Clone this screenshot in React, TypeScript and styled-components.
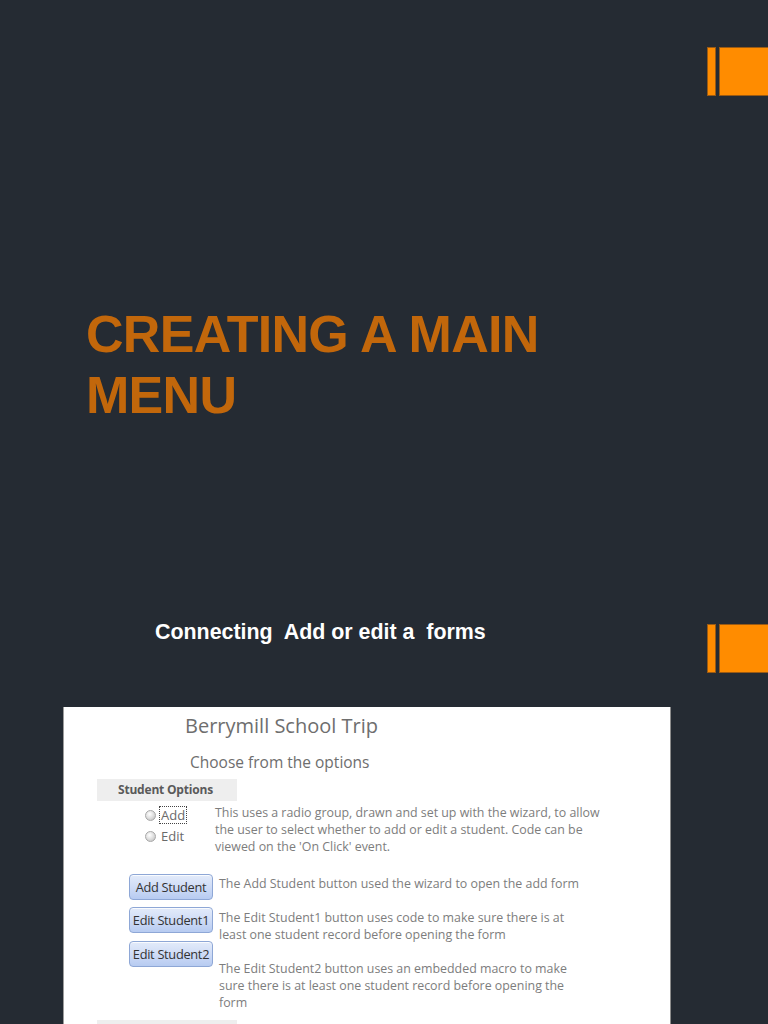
import React from "react";
import styled, { createGlobalStyle } from "styled-components";

const Global = createGlobalStyle`
  html, body {
    margin: 0;
    padding: 0;
    background: #252b33;
    overflow: hidden;
  }
  body {
    width: 768px;
    height: 1024px;
    font-family: "Liberation Sans", Arial, sans-serif;
  }
`;

const Page = styled.div`
  width: 768px;
  display: flex;
  flex-direction: column;
`;

const Slide = styled.section<{ $h?: number }>`
  width: 768px;
  height: ${(p) => (p.$h ? `${p.$h}px` : "auto")};
  background: #252b33;
  display: flex;
  flex-direction: column;
  box-sizing: border-box;
`;

const HeaderRow = styled.div<{ $top: number }>`
  display: flex;
  justify-content: space-between;
  align-items: flex-start;
  padding-top: ${(p) => p.$top}px;
`;

const Deco = styled.div`
  display: flex;
  gap: 3px;
  height: 49px;
  margin-left: auto;
`;

const Bar = styled.div<{ $w: number }>`
  width: ${(p) => p.$w}px;
  height: 100%;
  background: #ff8c00;
  box-sizing: border-box;
  border: 1px solid #9a5a14;
  border-right: ${(p) => (p.$w > 20 ? "none" : "1px solid #9a5a14")};
`;

const Title = styled.h1`
  margin: 208px 0 0 86px;
  font-family: "Liberation Sans", Arial, sans-serif;
  font-weight: 700;
  font-size: 52px;
  line-height: 61px;
  letter-spacing: -0.7px;
  color: #c2670b;
`;

const Subtitle = styled.h2`
  margin: -4px 0 0 155px;
  font-family: "Liberation Sans", Arial, sans-serif;
  font-weight: 700;
  font-size: 21.4px;
  line-height: 24px;
  color: #ffffff;
  white-space: pre;
`;

const Panel = styled.div`
  margin: 34px 0 0 63px;
  width: 606px;
  height: 360px;
  background: #ffffff;
  border-left: 1px solid #9c9c9c;
  border-right: 1px solid #8c8c8c;
  padding-top: 6px;
  display: flex;
  flex-direction: column;
  font-family: "Open Sans", "Noto Sans", sans-serif;
`;

const FormHeading = styled.div<{ $left: number; $size: number; $lh: number; $mt: number }>`
  margin: ${(p) => p.$mt}px 0 0 ${(p) => p.$left}px;
  font-size: ${(p) => p.$size}px;
  line-height: ${(p) => p.$lh}px;
  color: #6e6e6e;
  white-space: nowrap;
`;

const Band = styled.div<{ $mt: number }>`
  margin: ${(p) => p.$mt}px 0 0 33px;
  width: 140px;
  height: 22px;
  background: #eeeeee;
  box-sizing: border-box;
  padding-left: 21px;
  font-size: 12px;
  font-weight: 700;
  line-height: 21px;
  color: #5a5a5a;
  letter-spacing: -0.2px;
  white-space: nowrap;
`;

const RadioSection = styled.div`
  display: flex;
  margin: 3px 0 0 81px;
`;

const RadioGroup = styled.div`
  width: 70px;
  display: flex;
  flex-direction: column;
  gap: 3px;
  padding-top: 2px;
`;

const RadioItem = styled.label`
  display: flex;
  align-items: center;
  gap: 3px;
  height: 18px;
  font-size: 13px;
  color: #6a6a6a;
`;

const RadioDot = styled.span`
  width: 9px;
  height: 9px;
  border-radius: 50%;
  border: 1px solid #a8a8a8;
  background: radial-gradient(circle at 40% 35%, #ffffff 0%, #e2e2e2 45%, #b9b9b9 100%);
  flex: none;
`;

const RadioLabel = styled.span<{ $focus?: boolean }>`
  padding: 0 1px;
  line-height: 16px;
  border: 1px ${(p) => (p.$focus ? "dotted #444" : "solid transparent")};
`;

const Desc = styled.p<{ $mt?: number }>`
  margin: ${(p) => p.$mt ?? 0}px 0 0 0;
  font-size: 12.4px;
  line-height: 17px;
  color: #7d7d7d;
  white-space: nowrap;
`;

const ButtonSection = styled.div`
  display: flex;
  gap: 6px;
  margin: 18px 0 0 65px;
`;

const ButtonColumn = styled.div`
  display: flex;
  flex-direction: column;
  gap: 7.5px;
  padding-top: 0.5px;
`;

const FormButton = styled.button`
  width: 84px;
  height: 26px;
  padding: 0;
  box-sizing: border-box;
  border: 1px solid #8ea7d6;
  border-radius: 4px;
  background: linear-gradient(#e3ebfa 0%, #cfdcf6 50%, #b7cbf1 100%);
  box-shadow: inset 0 1px 0 rgba(255, 255, 255, 0.8);
  font-family: "Open Sans", "Noto Sans", sans-serif;
  font-size: 12.8px;
  letter-spacing: -0.3px;
  color: #333333;
  white-space: nowrap;
`;

const TextColumn = styled.div`
  display: flex;
  flex-direction: column;
  padding-top: 2px;
`;

export default function App() {
  return (
    <>
      <Global />
      <Page>
        <Slide $h={576}>
          <HeaderRow $top={47}>
            <Deco>
              <Bar $w={9} />
              <Bar $w={49} />
            </Deco>
          </HeaderRow>
          <Title>
            CREATING A MAIN
            <br />
            MENU
          </Title>
        </Slide>
        <Slide>
          <HeaderRow $top={48}>
            <Subtitle>{"Connecting  Add or edit a  forms"}</Subtitle>
            <Deco>
              <Bar $w={9} />
              <Bar $w={49} />
            </Deco>
          </HeaderRow>
          <Panel>
            <FormHeading $left={121} $size={20} $lh={26} $mt={0}>
              Berrymill School Trip
            </FormHeading>
            <FormHeading $left={126} $size={15.5} $lh={20} $mt={13}>
              Choose from the options
            </FormHeading>
            <Band $mt={7}>Student Options</Band>
            <RadioSection>
              <RadioGroup>
                <RadioItem>
                  <RadioDot />
                  <RadioLabel $focus>Add</RadioLabel>
                </RadioItem>
                <RadioItem>
                  <RadioDot />
                  <RadioLabel>Edit</RadioLabel>
                </RadioItem>
              </RadioGroup>
              <Desc>
                This uses a radio group, drawn and set up with the wizard, to allow
                <br />
                the user to select whether to add or edit a student. Code can be
                <br />
                viewed on the 'On Click' event.
              </Desc>
            </RadioSection>
            <ButtonSection>
              <ButtonColumn>
                <FormButton>Add Student</FormButton>
                <FormButton>Edit Student1</FormButton>
                <FormButton>Edit Student2</FormButton>
              </ButtonColumn>
              <TextColumn>
                <Desc>The Add Student button used the wizard to open the add form</Desc>
                <Desc $mt={17}>
                  The Edit Student1 button uses code to make sure there is at
                  <br />
                  least one student record before opening the form
                </Desc>
                <Desc $mt={17}>
                  The Edit Student2 button uses an embedded macro to make
                  <br />
                  sure there is at least one student record before opening the
                  <br />
                  form
                </Desc>
              </TextColumn>
            </ButtonSection>
            <Band $mt={9}>&nbsp;</Band>
          </Panel>
        </Slide>
      </Page>
    </>
  );
}
